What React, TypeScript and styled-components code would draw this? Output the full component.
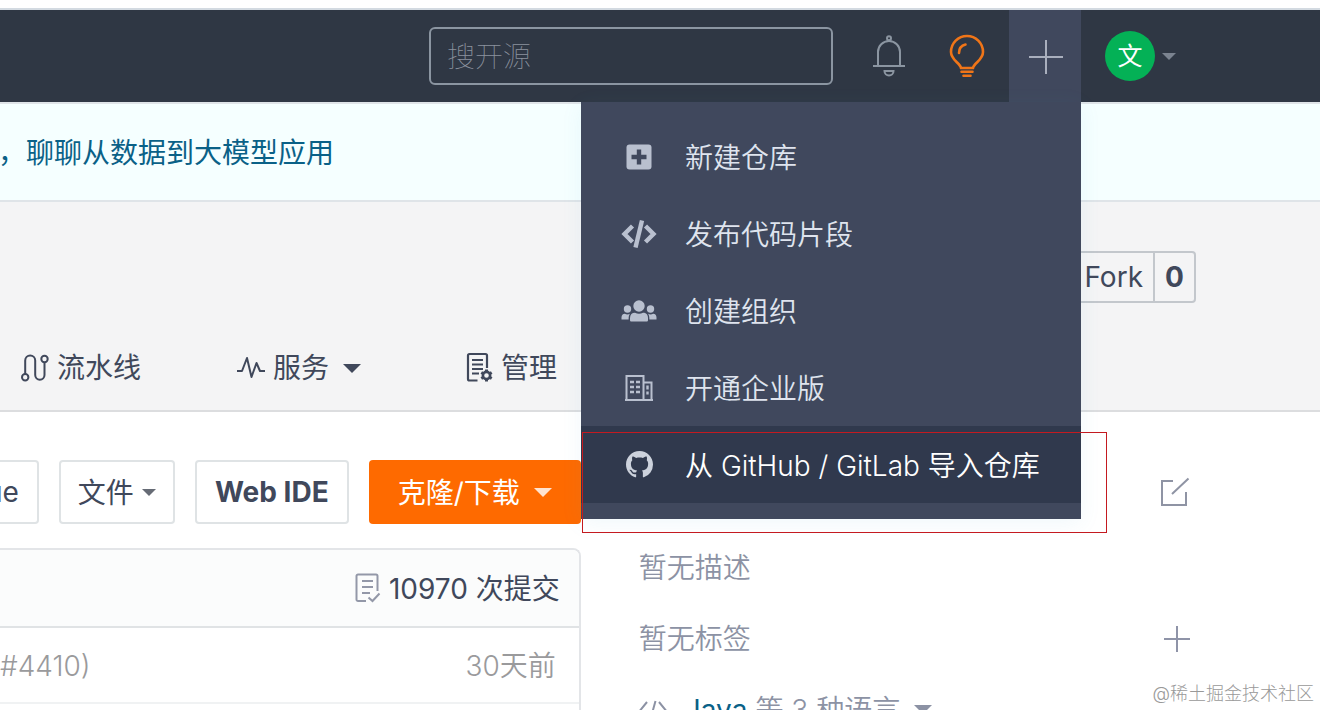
import React from "react";
import styled, { createGlobalStyle } from "styled-components";

const GlobalStyle = createGlobalStyle`
  *, *::before, *::after { box-sizing: border-box; }
  body {
    margin: 0;
    background: #fff;
    color: #40485b;
    font-family: Inter, "Noto Sans CJK SC", sans-serif;
    font-size: 28px;
    font-weight: 350;
    line-height: 40px;
  }
  button, input { font: inherit; color: inherit; }
  a { color: inherit; text-decoration: none; }
  svg { display: block; flex: none; }
`;

const Page = styled.div`
  height: 100vh;
  overflow: hidden;
  padding-top: 8px;
  display: flex;
  flex-direction: column;
`;

const TopBar = styled.header`
  position: relative;
  z-index: 2;
  flex: none;
  display: flex;
  justify-content: flex-end;
  align-items: center;
  height: 94px;
  padding-right: 144px;
  border-top: 2px solid #d3dae1;
  background: #2f3744;
`;

const SearchInput = styled.input`
  width: 404px;
  height: 58px;
  padding: 2px 16px 0;
  border: 2px solid #8b95a1;
  border-radius: 6px;
  background: transparent;
  color: #fff;
  outline: none;
  &::placeholder { color: #8b929e; opacity: 1; font-weight: 100; }
`;

const IconButton = styled.button<{ $space: number }>`
  display: grid;
  place-items: center;
  margin: 0 0 0 ${(p) => p.$space}px;
  padding: 0;
  border: 0;
  background: none;
`;

const CreateWrap = styled.div`
  position: relative;
  align-self: stretch;
  width: 72px;
  margin: 0 24px;
  background: #40485d;
`;

const CreateButton = styled.button`
  display: grid;
  place-items: center;
  width: 100%;
  height: 100%;
  padding: 2px 0 0 2px;
  border: 0;
  background: none;
`;

const Menu = styled.nav`
  position: absolute;
  top: 100%;
  right: 0;
  width: 500px;
  padding: 16px 0;
  background: #40485d;
  box-shadow: 0 4px 20px rgba(60, 160, 200, 0.08);
`;

const MenuItem = styled.a<{ $active?: boolean }>`
  display: flex;
  align-items: center;
  gap: 28px;
  height: 77px;
  padding-left: 40px;
  color: ${(p) => (p.$active ? "#fff" : "#dfe4ee")};
  background: ${(p) => (p.$active ? "#30394d" : "transparent")};
`;

const MenuIcon = styled.span`
  display: grid;
  place-items: center;
  width: 36px;
  height: 36px;
  color: #b9c0cf;
`;

const Label = styled.span`
  padding-top: 2px;
`;

const Highlight = styled.div`
  position: absolute;
  top: 330px;
  left: 1px;
  width: 525px;
  height: 101px;
  border: 1px solid #c41a20;
  pointer-events: none;
`;

const Account = styled.button`
  display: flex;
  align-items: center;
  gap: 7px;
  padding: 0;
  border: 0;
  background: none;
`;

const Avatar = styled.span`
  display: grid;
  place-items: center;
  width: 50px;
  height: 50px;
  border-radius: 50%;
  background: #04b156;
  color: #fff;
  font-size: 25px;
  font-weight: 400;
`;

const Caret = styled.span<{ $size?: number; $color?: string }>`
  flex: none;
  border: ${(p) => p.$size ?? 9}px solid transparent;
  border-top-color: ${(p) => p.$color ?? "#40485b"};
  border-bottom: 0;
`;

const Banner = styled.div`
  flex: none;
  height: 100px;
  padding-top: 29px;
  border: solid #dfe4e8;
  border-width: 2px 0;
  background: #f5ffff;
  color: #0a6187;
`;

const BannerLink = styled.a`
  display: block;
  margin-left: -2px;
  font-weight: 400;
`;

const RepoHeader = styled.section`
  flex: none;
  height: 210px;
  padding-top: 49px;
  border-bottom: 2px solid #dcdddf;
  background: #f4f4f5;
`;

const ForkRow = styled.div`
  display: flex;
  justify-content: flex-end;
  padding-right: 124px;
`;

const ForkGroup = styled.div`
  display: flex;
  height: 52px;
  border: 2px solid #c3c7cc;
  border-radius: 4px;
`;

const ForkButton = styled.button`
  padding: 0 10px 0 40px;
  border: 0;
  background: none;
  font-weight: 400;
`;

const ForkCount = styled.a`
  display: grid;
  place-items: center;
  width: 41px;
  border-left: 2px solid #c3c7cc;
  font-weight: 700;
`;

const Tabs = styled.nav`
  display: flex;
  gap: 96px;
  margin-top: 44px;
  padding-left: 21px;
`;

const Tab = styled.a`
  display: flex;
  align-items: center;
  gap: 8px;
  height: 42px;
  font-weight: 400;
`;

const TabCaret = styled.span`
  display: flex;
  padding: 0 8px 0 6px;
`;

const Content = styled.main`
  flex: 1;
  display: grid;
  grid-template-columns: 44% minmax(0, 1fr);
  padding-top: 48px;
`;

const LeftColumn = styled.div`
  min-width: 0;
  display: flex;
  flex-direction: column;
`;

const Toolbar = styled.div`
  display: flex;
  justify-content: flex-end;
  gap: 20px;
`;

const ToolButton = styled.button<{ $width: number; $primary?: boolean; $bold?: boolean }>`
  flex: none;
  display: flex;
  align-items: center;
  justify-content: center;
  gap: ${(p) => (p.$primary ? 14 : 8)}px;
  width: ${(p) => p.$width}px;
  height: 64px;
  padding: 0;
  border: ${(p) => (p.$primary ? "0" : "2px solid #dfe3e5")};
  border-radius: 4px;
  background: ${(p) => (p.$primary ? "#fe6a00" : "#fff")};
  color: ${(p) => (p.$primary ? "#fff" : "#40485b")};
  font-weight: ${(p) => (p.$bold ? 700 : 400)};
`;

const CutButton = styled(ToolButton)`
  justify-content: flex-end;
  padding-right: 18px;
  border-left: 0;
  border-radius: 0 4px 4px 0;
`;

const CommitCard = styled.div`
  flex: 1;
  margin-top: 24px;
  border: solid #e3e5e8;
  border-width: 2px 2px 0 0;
  border-radius: 0 8px 0 0;
`;

const CommitHeader = styled.a`
  display: flex;
  align-items: center;
  justify-content: flex-end;
  gap: 8px;
  height: 78px;
  padding-right: 19px;
  border-bottom: 2px solid #e0e3e5;
  border-radius: 0 6px 0 0;
  background: #fbfcfc;
  font-weight: 400;
`;

const CommitRow = styled.div`
  display: flex;
  align-items: center;
  justify-content: space-between;
  height: 76px;
  padding: 2px 23px 0 0;
  border-bottom: 2px solid #f0f2f3;
  color: #9a9a9c;
`;

const Aside = styled.aside`
  display: flex;
  flex-direction: column;
  padding: 0 130px 0 58px;
  color: #8c92a4;
`;

const AsideRow = styled.div<{ $height: number }>`
  flex: none;
  display: flex;
  align-items: center;
  justify-content: space-between;
  height: ${(p) => p.$height}px;
`;

const AsideHeading = styled.div`
  flex: none;
  display: flex;
  align-items: center;
  height: 64px;
  margin-bottom: 8px;
`;

const AsideButton = styled.button`
  display: grid;
  place-items: center;
  margin-left: auto;
  padding: 0;
  border: 0;
  background: none;
`;

const Languages = styled.div`
  display: flex;
  align-items: center;
  gap: 8px;
`;

const CodeSlot = styled.span`
  width: 38px;
`;

const LanguageLink = styled.a`
  color: #0a6187;
  font-weight: 400;
`;

const LanguageMore = styled.span`
  margin-right: 6px;
`;

const Watermark = styled.div`
  position: absolute;
  right: 6px;
  bottom: 4px;
  color: #999;
  font-size: 18px;
  font-weight: 300;
  line-height: 24px;
`;

const BellIcon = () => (
  <svg width="32" height="42" viewBox="0 0 32 42" fill="none" stroke="#8b95a1" strokeWidth="2">
    <circle cx="16" cy="3.2" r="2" />
    <path d="M5 31V17a11 11 0 0 1 22 0v14M0 31h32M11.5 36h9c0 6-9 6-9 0Z" />
  </svg>
);

const BulbIcon = () => (
  <svg width="36" height="44" viewBox="0 0 36 44" fill="none" stroke="#f07518" strokeWidth="2.6" strokeLinecap="round">
    <path d="M12 34c-1-5-10-8-10-16a16 16 0 0 1 32 0c0 8-9 11-10 16ZM10 19c0-5 2.500-7.500 6.500-8.500M12.500 37.800h11M14.500 41.800h7" />
  </svg>
);

const PlusIcon = ({ size, color }: { size: number; color: string }) => (
  <svg width={size} height={size} viewBox="0 0 34 34" stroke={color} strokeWidth={size > 30 ? 2 : 2.6}>
    <path d="M17 0v34M0 17h34" />
  </svg>
);

const NewRepoIcon = () => (
  <svg width="26" height="26" viewBox="0 0 26 26">
    <rect x="0.500" y="0.500" width="25" height="25" rx="3" fill="currentColor" />
    <path d="M13 5.500v15M5.500 13h15" stroke="#40485d" strokeWidth="4.400" />
  </svg>
);

const SnippetIcon = () => (
  <svg width="36" height="30" viewBox="0 0 36 30" fill="none" stroke="currentColor" strokeWidth="4.400">
    <path d="M11.500 7 3.500 15l8 8M24.500 7l8 8-8 8" />
    <path d="M21 1.500 14.500 28.500" />
  </svg>
);

const GroupIcon = () => (
  <svg width="36" height="22" viewBox="0 0 36 22" fill="currentColor">
    <circle cx="18" cy="6" r="5.700" />
    <circle cx="6.500" cy="9" r="3.700" />
    <circle cx="29.500" cy="9" r="3.700" />
    <path d="M9 20v-2c0-3.300 2-5.200 5-5.200 2.500 1.300 5.500 1.300 8 0 3 0 5 1.900 5 5.200v2c0 1-.6 1.500-1.500 1.500h-15c-.9 0-1.500-.5-1.500-1.500Z" />
    <path d="M.5 19.500v-2c0-2.200 1.300-3.700 3.300-3.700 1.700.8 3.500.8 5.200 0-1 1.200-1.400 3-1.400 5.700ZM35.500 19.500v-2c0-2.200-1.300-3.700-3.300-3.700-1.700.8-3.500.8-5.200 0 1 1.200 1.400 3 1.400 5.700Z" />
  </svg>
);

const BuildingIcon = () => (
  <svg width="28" height="28" viewBox="0 0 28 28" fill="none" stroke="currentColor" strokeWidth="2">
    <path d="M1.500 26V2h17v24M18.500 8.500h8V26M0 26h28" />
    <path d="M5 8h4M11 8h4M5 13h4M11 13h4M5 18h4M11 18h4M22.500 11.500v4M22.500 17.500v3" strokeWidth="2.400" />
  </svg>
);

const GithubIcon = () => (
  <svg width="27" height="27" viewBox="0 0 16 16" fill="#ccd2dc">
    <path d="M8 0C3.580 0 0 3.580 0 8c0 3.540 2.290 6.530 5.470 7.590.4.070.55-.17.55-.38 0-.19-.01-.82-.01-1.490-2.010.37-2.530-.49-2.690-.94-.09-.23-.48-.94-.82-1.130-.28-.15-.68-.52-.01-.53.63-.01 1.080.58 1.230.82.72 1.210 1.870.87 2.330.66.07-.52.28-.87.51-1.070-1.780-.2-3.640-.89-3.640-3.950 0-.87.31-1.590.82-2.150-.08-.2-.36-1.020.08-2.120 0 0 .67-.21 2.200.82.64-.18 1.320-.27 2-.27s1.360.09 2 .27c1.530-1.040 2.200-.82 2.200-.82.44 1.100.16 1.920.08 2.120.51.56.82 1.270.82 2.150 0 3.070-1.870 3.750-3.650 3.950.29.25.54.73.54 1.480 0 1.070-.01 1.930-.01 2.200 0 .21.15.46.55.38A8.010 8.010 0 0 0 16 8c0-4.420-3.580-8-8-8Z" />
  </svg>
);

const PipelineIcon = () => (
  <svg width="28" height="28" viewBox="0 0 28 28" fill="none" stroke="currentColor" strokeWidth="2">
    <circle cx="4.200" cy="23.300" r="3.200" />
    <circle cx="23.500" cy="5" r="3.200" />
    <path d="M4.200 20V6.500a5 5 0 0 1 10 0v14.500a4.650 4.650 0 0 0 9.300 0V8.500" />
  </svg>
);

const PulseIcon = () => (
  <svg width="28" height="28" viewBox="0 0 28 28" fill="none" stroke="currentColor" strokeWidth="2" strokeLinejoin="round">
    <path d="M0 17h5L10 4l4.500 19L19.500 9l3.500 8h5" />
  </svg>
);

const ManageIcon = () => (
  <svg width="28" height="32" viewBox="0 0 28 32" fill="none" stroke="currentColor" strokeWidth="2.200">
    <path d="M22 16V3.500a1.500 1.500 0 0 0-1.500-1.500H4.500A1.500 1.500 0 0 0 3 3.500v23.500a1.500 1.500 0 0 0 1.500 1.500h8M7 8h11M7 12.500h11M7 17h11M7 21.500h7" />
    <circle cx="21.500" cy="23.500" r="3.600" strokeWidth="2.600" />
    <path d="M21.500 17.500v2M21.500 27.500v2M16.300 20.500l1.700 1M25 25.500l1.700 1M16.300 26.500l1.700-1M25 21.500l1.700-1" strokeWidth="3" />
  </svg>
);

const CommitsIcon = () => (
  <svg width="26" height="30" viewBox="0 0 26 30" fill="none" stroke="#9398a8" strokeWidth="2">
    <path d="M22.500 18V3a1.500 1.500 0 0 0-1.500-1.500H3A1.500 1.500 0 0 0 1.500 3v23.500A1.500 1.500 0 0 0 3 28h8M7 8h11M7 14h11M7 20h8M13.500 24.500l4 3.500 7-7.500" />
  </svg>
);

const EditIcon = () => (
  <svg width="30" height="30" viewBox="0 0 30 30" fill="none" stroke="#8f94a4" strokeWidth="2">
    <path d="M13 4H2v24h24V15M12 17 28.500 1.500" />
  </svg>
);

const CodeIcon = () => (
  <svg width="28" height="24" viewBox="0 0 28 24" fill="none" stroke="#8c92a4" strokeWidth="2">
    <path d="M8 4 1.500 12 8 20M20 4l6.500 8L20 20M16.500 3l-5 18" />
  </svg>
);

const menuItems = [
  { label: "新建仓库", icon: <NewRepoIcon /> },
  { label: "发布代码片段", icon: <SnippetIcon /> },
  { label: "创建组织", icon: <GroupIcon /> },
  { label: "开通企业版", icon: <BuildingIcon /> },
  { label: "从 GitHub / GitLab 导入仓库", icon: <GithubIcon />, active: true },
];

export default function App() {
  return (
    <Page>
      <GlobalStyle />
      <TopBar>
        <SearchInput type="search" aria-label="搜开源" placeholder="搜开源" />
        <IconButton $space={40} aria-label="通知"><BellIcon /></IconButton>
        <IconButton $space={44} aria-label="建议"><BulbIcon /></IconButton>
        <CreateWrap>
          <CreateButton aria-label="新建" aria-expanded="true">
            <PlusIcon size={34} color="#a9afbd" />
          </CreateButton>
          <Menu>
            {menuItems.map((item) => (
              <MenuItem href="#" key={item.label} $active={item.active}>
                <MenuIcon>{item.icon}</MenuIcon>
                <Label>{item.label}</Label>
              </MenuItem>
            ))}
            <Highlight />
          </Menu>
        </CreateWrap>
        <Account aria-label="账户">
          <Avatar>文</Avatar>
          <Caret $size={7} $color="#7b8390" />
        </Account>
      </TopBar>

      <Banner><BannerLink href="#">，聊聊从数据到大模型应用</BannerLink></Banner>

      <RepoHeader>
        <ForkRow>
          <ForkGroup>
            <ForkButton>Fork</ForkButton>
            <ForkCount href="#">0</ForkCount>
          </ForkGroup>
        </ForkRow>
        <Tabs>
          <Tab href="#"><PipelineIcon />流水线</Tab>
          <Tab href="#"><PulseIcon />服务<TabCaret><Caret /></TabCaret></Tab>
          <Tab href="#"><ManageIcon />管理</Tab>
        </Tabs>
      </RepoHeader>

      <Content>
        <LeftColumn>
          <Toolbar>
            <CutButton $width={40}>ue</CutButton>
            <ToolButton $width={116}><Label>文件</Label><Caret $size={7} $color="#666b75" /></ToolButton>
            <ToolButton $width={154} $bold>Web IDE</ToolButton>
            <ToolButton $width={212} $primary><Label>克隆/下载</Label><Caret $color="#ffe3d0" /></ToolButton>
          </Toolbar>
          <CommitCard>
            <CommitHeader href="#"><CommitsIcon /><Label>10970 次提交</Label></CommitHeader>
            <CommitRow><span>#4410)</span><time>30天前</time></CommitRow>
          </CommitCard>
        </LeftColumn>
        <Aside>
          <AsideHeading><AsideButton aria-label="编辑"><EditIcon /></AsideButton></AsideHeading>
          <AsideRow $height={71}>暂无描述</AsideRow>
          <AsideRow $height={71}>
            暂无标签
            <AsideButton aria-label="添加标签"><PlusIcon size={26} color="#8f94a8" /></AsideButton>
          </AsideRow>
          <AsideRow $height={71}>
            <Languages>
              <CodeSlot><CodeIcon /></CodeSlot>
              <LanguageLink href="#">Java</LanguageLink>
              <LanguageMore>等 3 种语言</LanguageMore>
              <Caret $color="#8c92a4" />
            </Languages>
          </AsideRow>
        </Aside>
      </Content>
      <Watermark>@稀土掘金技术社区</Watermark>
    </Page>
  );
}
